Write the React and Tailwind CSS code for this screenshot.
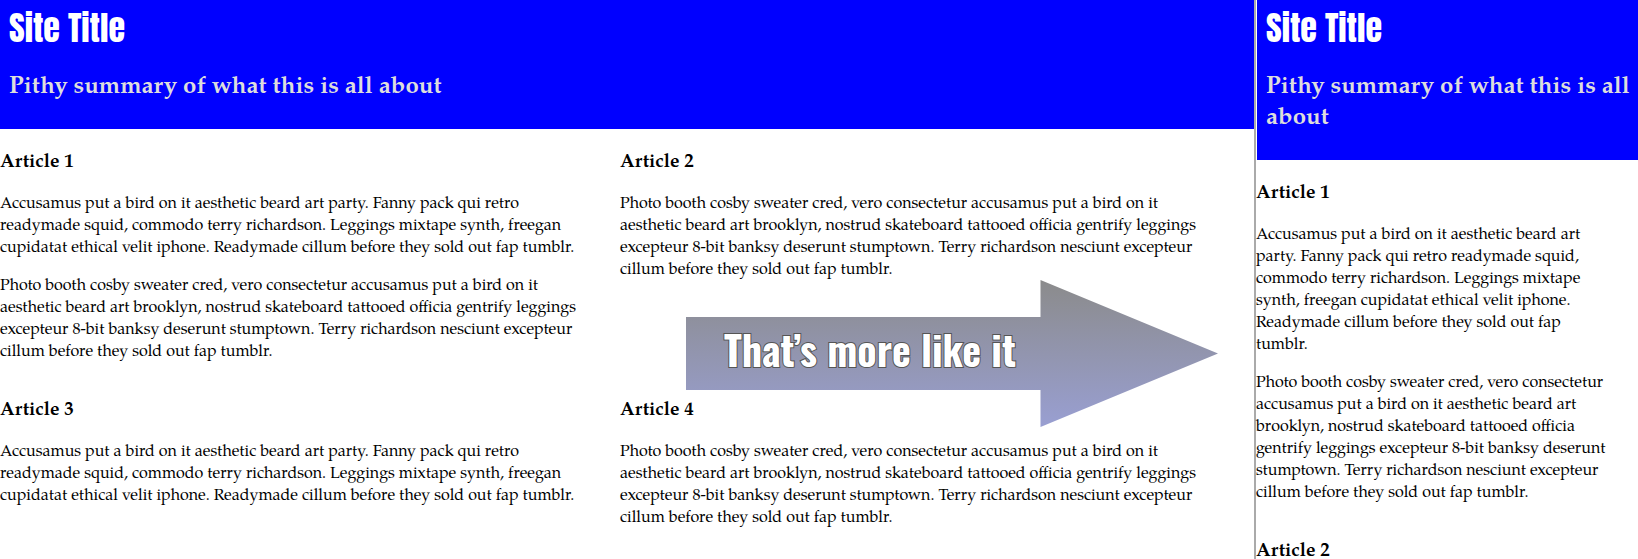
const accusamus =
  'Accusamus put a bird on it aesthetic beard art party. Fanny pack qui retro readymade squid, commodo terry richardson. Leggings mixtape synth, freegan cupidatat ethical velit iphone. Readymade cillum before they sold out fap tumblr.';
const photoBooth =
  'Photo booth cosby sweater cred, vero consectetur accusamus put a bird on it aesthetic beard art brooklyn, nostrud skateboard tattooed officia gentrify leggings excepteur 8-bit banksy deserunt stumptown. Terry richardson nesciunt excepteur cillum before they sold out fap tumblr.';

const articles = [
  { title: 'Article 1', paragraphs: [accusamus, photoBooth] },
  { title: 'Article 2', paragraphs: [photoBooth] },
  { title: 'Article 3', paragraphs: [accusamus] },
  { title: 'Article 4', paragraphs: [photoBooth] },
];

function SiteHeader() {
  return (
    <header className="bg-[#0000ff] pt-2 pb-[26px] pl-[9px]">
      <h1 className="font-['Anton','Roboto_Condensed',sans-serif] text-[34px] leading-10 font-normal text-white">
        Site Title
      </h1>
      <h2 className="mt-6 text-2xl leading-[31px] font-bold text-[#dddddd]">
        Pithy summary of what this is all about
      </h2>
    </header>
  );
}

function Article({ title, paragraphs }) {
  return (
    <article className="pt-[22px]">
      <h3 className="text-[19px] leading-6 font-bold">{title}</h3>
      <div className="mt-[18px] flex flex-col gap-4 pb-3.5">
        {paragraphs.map((text) => (
          <p key={text} className="text-base leading-[22px]">
            {text}
          </p>
        ))}
      </div>
    </article>
  );
}

function Arrow() {
  return (
    <svg
      className="absolute top-[280px] left-[686px] h-[147px] w-[532px]"
      viewBox="0 0 532 147"
      role="img"
      aria-label="That’s more like it"
    >
      <defs>
        <linearGradient id="arrow-fill" x1="0" y1="0" x2="0" y2="1">
          <stop offset="0" stopColor="#8b8b8b" />
          <stop offset="1" stopColor="#999fd2" />
        </linearGradient>
      </defs>
      <path d="M0 37H354.500V0L532 73.500L354.500 147V110H0Z" fill="url(#arrow-fill)" />
      <text
        x="38"
        y="87"
        className="fill-white stroke-[#555555] stroke-2 font-['Oswald','Roboto_Condensed',sans-serif] text-[40px] font-bold [paint-order:stroke]"
      >
        That’s more like it
      </text>
    </svg>
  );
}

export default function App() {
  return (
    <div className="flex h-screen overflow-hidden bg-white font-['TeX_Gyre_Pagella','Palatino_Linotype','Liberation_Serif',serif] text-black">
      <section className="relative min-w-0 flex-[1254_1_0%]">
        <SiteHeader />
        <main className="grid grid-cols-2 gap-x-[30px] pr-11">
          {articles.map((article) => (
            <Article key={article.title} {...article} />
          ))}
        </main>
        <Arrow />
      </section>
      <section className="min-w-0 flex-[382_1_0%] border-l-2 border-[#aaaaaa]">
        <div className="pl-px">
          <SiteHeader />
        </div>
        <main className="flex flex-col pr-7">
          {articles.map((article) => (
            <Article key={article.title} {...article} />
          ))}
        </main>
      </section>
    </div>
  );
}
